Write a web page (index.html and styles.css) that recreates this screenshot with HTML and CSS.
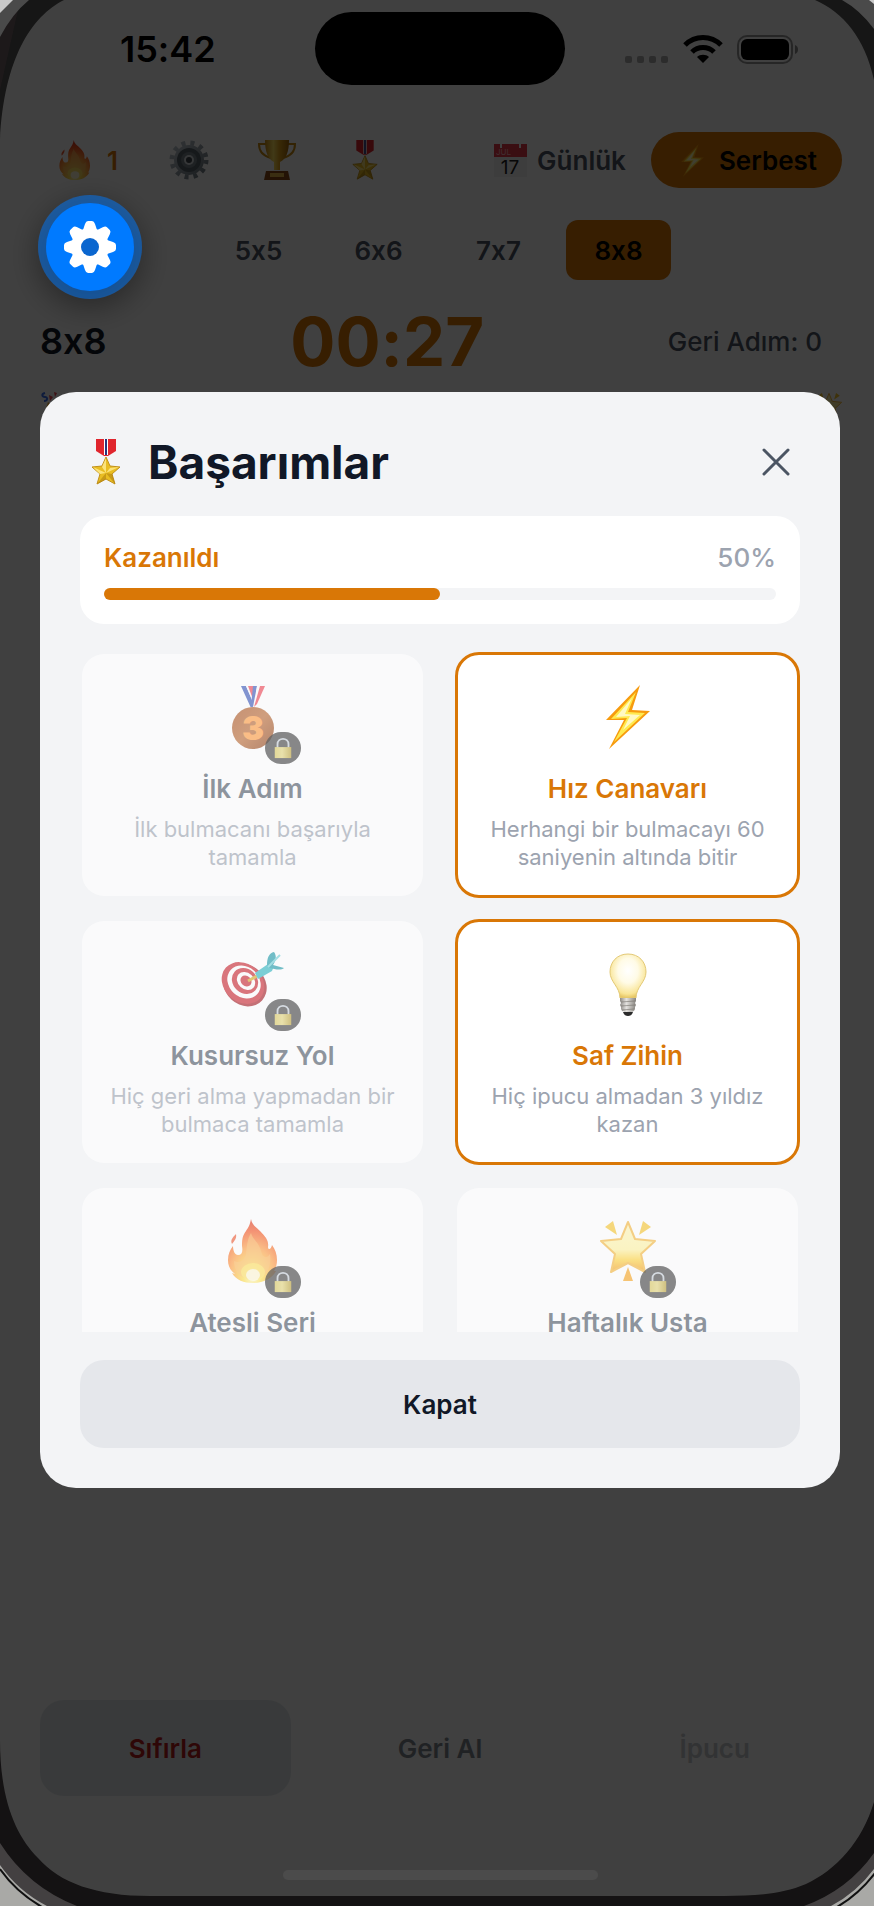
FILE: index.html
```html
<!DOCTYPE html>
<html lang="tr">
<head>
    <meta charset="UTF-8">
    <meta name="viewport" content="width=device-width, initial-scale=1.0">
    <title>Başarımlar</title>
    <link rel="stylesheet" href="styles.css">
</head>
<body>
    <!-- Icon set -->
    <svg class="sprite" width="0" height="0" aria-hidden="true">
        <defs>
            <radialGradient id="gFire" cx="50%" cy="90%" r="85%">
                <stop offset="0" stop-color="#fffbd0"/>
                <stop offset=".22" stop-color="#ffe14a"/>
                <stop offset=".55" stop-color="#ff9a3c"/>
                <stop offset=".85" stop-color="#f4511e"/>
                <stop offset="1" stop-color="#e23b1c"/>
            </radialGradient>
            <linearGradient id="gGold" x1="0" x2="1" y1="0" y2="0">
                <stop offset="0" stop-color="#c98a10"/>
                <stop offset=".35" stop-color="#ffe25e"/>
                <stop offset=".6" stop-color="#e0a31c"/>
                <stop offset="1" stop-color="#a3660a"/>
            </linearGradient>
            <radialGradient id="gBulb" cx="50%" cy="38%" r="62%">
                <stop offset="0" stop-color="#ffffff"/>
                <stop offset=".45" stop-color="#fffbe6"/>
                <stop offset=".85" stop-color="#f9e596"/>
                <stop offset="1" stop-color="#e6c562"/>
            </radialGradient>
            <linearGradient id="gBase" x1="0" x2="1" y1="0" y2="0">
                <stop offset="0" stop-color="#8d8a86"/>
                <stop offset=".4" stop-color="#e4e2df"/>
                <stop offset="1" stop-color="#87847f"/>
            </linearGradient>
            <linearGradient id="gBronze" x1="0" x2="1" y1="0" y2="1">
                <stop offset="0" stop-color="#a8501c"/>
                <stop offset=".5" stop-color="#b8662f"/>
                <stop offset="1" stop-color="#8a3c12"/>
            </linearGradient>
            <linearGradient id="gStar" x1="0" x2="0" y1="0" y2="1">
                <stop offset="0" stop-color="#fff6b8"/>
                <stop offset=".55" stop-color="#fff3a0"/>
                <stop offset=".75" stop-color="#ffd43c"/>
                <stop offset="1" stop-color="#f59a14"/>
            </linearGradient>
            <linearGradient id="gLock" x1="0" x2="1" y1="0" y2="0">
                <stop offset="0" stop-color="#d8c65c"/>
                <stop offset=".45" stop-color="#e2d47a"/>
                <stop offset="1" stop-color="#b89e34"/>
            </linearGradient>
            <linearGradient id="gSteel" x1="0" x2="1" y1="0" y2="1">
                <stop offset="0" stop-color="#c3ccd4"/>
                <stop offset="1" stop-color="#6d7881"/>
            </linearGradient>
        </defs>

        <symbol id="fire" viewBox="0 0 64 64">
            <path fill="url(#gFire)" d="M30 0c1 6 5 8 9 12 6 6 9 10 8 16 0 3 3 3 4-2 3 4 5 9 5 15 0 4-1 8-3 11l2 0c-4 8-13 12-23 12-9 0-17-3-21-10l3 1C9 51 7 47 7 41c0-6 2-10 5-14 0 5 2 9 5 9 4 0 5-3 4-9 0-8 1-11 4-15 2-3 4-6 5-12z"/>
            <path fill="#fdb95e" opacity=".6" d="M30 14c1 5 7 9 9 15 2 5 2 9 6 9 2 0 3-2 4-3 2 15-5 25-17 26-13-1-19-9-19-19 5 3 11-1 12-7 1-8 1-14 5-21z"/>
            <ellipse cx="32" cy="53" rx="12" ry="9" fill="#ffee62" opacity=".6"/>
            <ellipse cx="32" cy="56" rx="7" ry="6" fill="#fff" opacity=".7"/>
            <path fill="#ef5a33" d="M15 15c1 5-2 7-4 10-2-4 1-7 4-10z"/>
        </symbol>

        <symbol id="bolt" viewBox="0 0 64 64">
            <path fill="#f79b0e" d="M44 0 36 25l18 1-41 38 15-29-18 0z"/>
            <path fill="#ffea4f" d="M40 7 32 27l17 1-31 29 13-24-16 1z"/>
            <path fill="#fffde0" d="M36 13 29 29l15 1-17 15 7-14-14 1z" opacity=".8"/>
        </symbol>

        <symbol id="bulb" viewBox="0 0 64 64">
            <path fill="url(#gBulb)" stroke="#e3c977" stroke-width="1" d="M32 2c11 0 18 8 18 18 0 10-10 15-10 26H24c0-11-10-16-10-26C14 10 21 2 32 2z"/>
            <path fill="url(#gBase)" d="M24 46h16v3l-1 2 1 2-1 2v2c-1 3-3 3-7 3s-6 0-7-3v-2l-1-2 1-2-1-2z"/>
            <path stroke="#77736d" stroke-width="1" opacity=".6" d="M25 50l14-1M25 54l14-1M26 58l12-1"/>
            <path fill="#2b2b2b" d="M27 60h10c-1 3-3 4-5 4s-4-1-5-4z"/>
        </symbol>

        <symbol id="target" viewBox="0 0 64 64">
            <ellipse cx="24" cy="33" rx="23" ry="20" transform="rotate(42 24 33)" fill="#a51a22"/>
            <ellipse cx="22" cy="31" rx="23" ry="19" transform="rotate(42 22 31)" fill="#c9222c"/>
            <ellipse cx="23" cy="30" rx="18" ry="15" transform="rotate(42 23 30)" fill="#fff"/>
            <ellipse cx="24" cy="29" rx="14" ry="12" transform="rotate(42 24 29)" fill="#c9222c"/>
            <ellipse cx="25" cy="29" rx="10" ry="8" transform="rotate(42 25 29)" fill="#fff"/>
            <ellipse cx="25" cy="29" rx="6" ry="5" transform="rotate(42 25 29)" fill="#c9222c"/>
            <path stroke="#d6a821" stroke-width="3" d="M27 29l9-5"/>
            <path fill="#2cb5c0" d="M34 21l13-9 6 2-2 5-14 8z"/>
            <path fill="#1b9aa8" d="M46 13c0-7 2-12 7-13 3 4 2 9-1 13l11 3c-3 3-10 1-14 0z"/>
            <path stroke="#6fd0d8" stroke-width="2" d="M47 15 59 3"/>
        </symbol>

        <symbol id="star" viewBox="0 0 64 64">
            <path fill="url(#gStar)" stroke="#f5b63a" stroke-width="2" stroke-linejoin="round" d="M32 3l7 17 20 2-14 13 4 18-17-9-17 9 4-18L5 22l20-2z"/>
            <path fill="#f7c52c" d="M9 8l8-6 4 14zM55 8l-8-6-4 14z"/>
            <path fill="#f8a51e" d="M27 62l5-14 5 14z"/>
        </symbol>

        <symbol id="medal" viewBox="0 0 46 46">
            <path fill="#e0252d" d="M13 0h20v12l-8 5h-4l-8-5z"/>
            <path fill="#fff" d="M21 0h4v16h-4z"/>
            <path fill="#27357e" d="M22 0h2v16h-2z"/>
            <path fill="#e9bd22" stroke="#c1901a" stroke-width="1" d="M23 18l4 9 10 1-8 7 3 10-9-5-9 5 3-10-8-7 10-1z"/>
            <path fill="#fbe27a" d="M23 19l0 15-4-6zM10 28l13 6-6 1zM36 28l-13 6 4-5z"/>
            <path fill="#a8770c" opacity=".5" d="M32 45l-9-11 6 1zM14 45l9-11v6z"/>
        </symbol>

        <symbol id="cog" viewBox="0 0 40 40">
            <circle cx="20" cy="20" r="17" fill="none" stroke="url(#gSteel)" stroke-width="5" stroke-dasharray="4 5"/>
            <circle cx="20" cy="20" r="15" fill="url(#gSteel)"/>
            <circle cx="20" cy="20" r="12" fill="#59636b"/>
            <circle cx="20" cy="20" r="8" fill="#77828a"/>
            <circle cx="20" cy="20" r="5" fill="#d5dbe0"/>
            <circle cx="20" cy="20" r="3" fill="#3d454b"/>
        </symbol>

        <symbol id="trophy" viewBox="0 0 40 40">
            <path fill="none" stroke="#c98a10" stroke-width="2" d="M10 4H2c0 8 4 12 12 14M30 4h8c0 8-4 12-12 14"/>
            <path fill="url(#gGold)" d="M8 0h24c0 12-3 19-9 22v8h-6v-8C11 19 8 12 8 0z"/>
            <path fill="#8a4a16" d="M9 31h22l2 9H7z"/>
            <path fill="#e5b64a" d="M13 33h14v4H13z"/>
        </symbol>

        <symbol id="lock" viewBox="0 0 20 24">
            <path fill="none" stroke="#c3cbd4" stroke-width="2" d="M4 12V8c0-4 3-6 6-6s6 2 6 6v4"/>
            <path fill="url(#gLock)" d="M1 11h18v12H1z"/>
        </symbol>

        <symbol id="confetti" viewBox="0 0 30 30">
            <path fill="none" stroke="#3b6ff0" stroke-width="2" d="M5 1c-4 1-3 4 0 4s3 4-1 4"/>
            <path fill="#ef4352" d="M9 3l4 2-3 4zM14 0l3 1-2 4z"/>
            <path fill="#f3b23a" d="M8 10l14 12L2 29z"/>
        </symbol>
    </svg>

    <div class="screen">
        <header class="status-bar">
            <span class="clock">15:42</span>
            <div class="status-icons">
                <svg width="45" height="8" viewBox="0 0 45 8" fill="#000" opacity=".3">
                    <rect x="1" width="7" height="7" rx="2"/><rect x="13" width="7" height="7" rx="2"/><rect x="25" width="7" height="7" rx="2"/><rect x="37" width="7" height="7" rx="2"/>
                </svg>
                <svg class="wifi" width="40" height="29" viewBox="0 0 40 29">
                    <g fill="none" stroke="#000" stroke-width="5">
                        <path d="M2 10c10-10 26-10 36 0"/>
                        <path d="M9 17c6-6 16-6 22 0"/>
                    </g>
                    <path d="M20 28l-6-6c3-3 9-3 12 0z"/>
                </svg>
                <svg width="63" height="29" viewBox="0 0 63 29">
                    <rect x="1" y="1" width="54" height="27" rx="9" fill="none" stroke="#000" stroke-opacity=".4" stroke-width="2"/>
                    <rect x="4" y="4" width="48" height="21" rx="6"/>
                    <path d="M58 10c4 1 4 8 0 9z" opacity=".45"/>
                </svg>
            </div>
        </header>

        <nav class="top-row">
            <div class="chips">
                <button class="chip streak"><svg width="40" height="40"><use href="#fire"/></svg>1</button>
                <button class="chip" aria-label="Ayarlar"><svg width="40" height="40"><use href="#cog"/></svg></button>
                <button class="chip" aria-label="Sıralama"><svg width="40" height="40"><use href="#trophy"/></svg></button>
                <button class="chip" aria-label="Başarımlar"><svg width="40" height="40"><use href="#medal"/></svg></button>
            </div>
            <div class="modes">
                <button class="mode">
                    <svg width="33" height="33" viewBox="0 0 33 33">
                        <path fill="#f3f3f3" d="M0 0h33v33H0z"/>
                        <path fill="#e5394a" d="M0 0h33v13H0z"/>
                        <path fill="#fff" d="M6 0h2v4H6zM25 0h2v4h-2z"/>
                        <text class="cal-month" x="2" y="11">JUL</text>
                        <text class="cal-day" x="16" y="30" text-anchor="middle">17</text>
                    </svg>
                    Günlük
                </button>
                <button class="mode active"><svg width="33" height="33"><use href="#bolt"/></svg>Serbest</button>
            </div>
        </nav>

        <div class="sizes">
            <button class="size">5x5</button>
            <button class="size">6x6</button>
            <button class="size">7x7</button>
            <button class="size active">8x8</button>
        </div>

        <div class="stats">
            <span class="level">8x8</span>
            <span class="timer">00:27</span>
            <span class="undo-count">Geri Adım: 0</span>
        </div>

        <div class="board-line">
            <svg width="30" height="30"><use href="#confetti"/></svg>
            <svg width="30" height="30"><use href="#star"/></svg>
        </div>

        <footer class="actions">
            <button class="action reset">Sıfırla</button>
            <button class="action undo">Geri Al</button>
            <button class="action" disabled>İpucu</button>
        </footer>
    </div>

    <div class="overlay">
        <section class="modal" role="dialog" aria-labelledby="modalTitle">
            <div class="modal-header">
                <svg width="52" height="46"><use href="#medal"/></svg>
                <h2 id="modalTitle">Başarımlar</h2>
                <button class="close-icon" aria-label="Pencereyi kapat">
                    <svg width="28" height="28" viewBox="0 0 28 28" fill="none" stroke="#4b5563" stroke-width="3" stroke-linecap="round"><path d="M2 2l24 24M26 2L2 26"/></svg>
                </button>
            </div>

            <div class="progress-card">
                <div class="progress-text">
                    <span class="earned-label">Kazanıldı</span>
                    <span class="percent">50%</span>
                </div>
                <div class="bar" role="progressbar" aria-valuenow="50" aria-valuemin="0" aria-valuemax="100" aria-label="Kazanıldı">
                    <div class="bar-fill" style="width: 50%"></div>
                </div>
            </div>

            <div class="badge-list">
                <article class="card locked">
                    <div class="card-icon">
                        <svg width="64" height="64" viewBox="0 0 64 64">
                            <path fill="#3856b8" d="M20 1h5l8 18-3 4z"/>
                            <path fill="#fff" d="M25 1h2l7 14-1 5z"/>
                            <path fill="#ef4352" d="M27 1h5l4 9-3 7z"/>
                            <path fill="#3856b8" d="M32 1h4l-3 22-3-2z"/>
                            <path fill="#fff" d="M36 1h3l-5 21h-2z"/>
                            <path fill="#ef4352" d="M39 1h5l-8 18-3 3z"/>
                            <circle cx="32" cy="43" r="21" fill="url(#gBronze)"/>
                            <text class="medal-number" x="32" y="55" text-anchor="middle">3</text>
                        </svg>
                        <span class="lock"><svg width="20" height="22"><use href="#lock"/></svg></span>
                    </div>
                    <h3>İlk Adım</h3>
                    <p>İlk bulmacanı başarıyla tamamla</p>
                </article>
                <article class="card earned">
                    <div class="card-icon"><svg width="64" height="64"><use href="#bolt"/></svg></div>
                    <h3>Hız Canavarı</h3>
                    <p>Herhangi bir bulmacayı 60 saniyenin altında bitir</p>
                </article>
                <article class="card locked">
                    <div class="card-icon">
                        <svg width="64" height="64"><use href="#target"/></svg>
                        <span class="lock"><svg width="20" height="22"><use href="#lock"/></svg></span>
                    </div>
                    <h3>Kusursuz Yol</h3>
                    <p>Hiç geri alma yapmadan bir bulmaca tamamla</p>
                </article>
                <article class="card earned">
                    <div class="card-icon"><svg width="64" height="64"><use href="#bulb"/></svg></div>
                    <h3>Saf Zihin</h3>
                    <p>Hiç ipucu almadan 3 yıldız kazan</p>
                </article>
                <article class="card locked">
                    <div class="card-icon">
                        <svg width="64" height="64"><use href="#fire"/></svg>
                        <span class="lock"><svg width="20" height="22"><use href="#lock"/></svg></span>
                    </div>
                    <h3>Atesli Seri</h3>
                </article>
                <article class="card locked">
                    <div class="card-icon">
                        <svg width="64" height="64"><use href="#star"/></svg>
                        <span class="lock"><svg width="20" height="22"><use href="#lock"/></svg></span>
                    </div>
                    <h3>Haftalık Usta</h3>
                </article>
            </div>

            <button class="close-button">Kapat</button>
        </section>
    </div>

    <button class="fab" aria-label="Geliştirici menüsü">
        <svg width="52" height="52" viewBox="-26 -26 52 52">
            <defs><path id="tooth" d="M-8 -14L-5 -23Q-4 -26 -2 -26H2Q4 -26 5 -23L8 -14z"/></defs>
            <g fill="#fff">
                <circle r="19"/>
                <use href="#tooth"/><use href="#tooth" transform="rotate(45)"/><use href="#tooth" transform="rotate(90)"/><use href="#tooth" transform="rotate(135)"/>
                <use href="#tooth" transform="rotate(180)"/><use href="#tooth" transform="rotate(225)"/><use href="#tooth" transform="rotate(270)"/><use href="#tooth" transform="rotate(315)"/>
            </g>
            <circle r="9" fill="#0a66cf"/>
        </svg>
    </button>

    <!-- Phone frame -->
    <div class="frame" aria-hidden="true">
        <div class="island"></div>
        <div class="home-bar"></div>
        <svg class="corner top-left" width="70" height="140" viewBox="0 0 70 140">
            <path fill="#161616" d="M0 0h64C32 16 4 58 0 140z"/>
            <path fill="#231c1e" d="M0 10h18L0 90z" opacity=".6"/>
            <path fill="#4a4a4a" d="M0 0h29Q12 14 0 37z"/>
            <path fill="#c9c9c9" d="M0 0h13L0 13z"/>
        </svg>
        <svg class="corner top-right" width="60" height="80" viewBox="0 0 60 80">
            <path fill="#161616" d="M60 0H1c28 12 50 38 59 80z"/>
            <path fill="#4a4a4a" d="M60 0H28q18 10 32 29z"/>
            <path fill="#c9c9c9" d="M60 0h-5l5 4z"/>
        </svg>
        <svg class="corner bottom-left" width="150" height="166" viewBox="0 0 150 166">
            <path fill="#141213" d="M0 0c0 60 16 96 38 118 22 25 58 38 112 38v10H0z"/>
            <path fill="#434041" d="M0 103q28 44 77 63H0z"/>
            <path fill="#a9a9a6" d="M0 125q18 26 47 41H0z"/>
            <path fill="none" stroke="#111" stroke-width="2" d="M0 129q16 23 42 38"/>
        </svg>
        <svg class="corner bottom-right" width="150" height="110" viewBox="0 0 150 110">
            <path fill="#141213" d="M150 6c-12 40-38 68-68 82-24 10-48 12-82 12v10h150z"/>
            <path fill="#434041" d="M150 57q-26 37-70 53h70z"/>
            <path fill="#a9a9a6" d="M150 73q-18 24-43 37h43z"/>
            <path fill="none" stroke="#111" stroke-width="2" d="M151 77q-16 21-38 34"/>
        </svg>
    </div>
</body>
</html>
```
FILE: styles.css
```css
* {
    box-sizing: border-box;
}
body {
    margin: 0;
    font-family: Inter, "Liberation Sans", sans-serif;
    font-size: 26px;
    /* keeps the x in "8x8" a plain letter */
    font-variant-ligatures: no-contextual;
    background-color: #fdfdfd;
    color: #111827;
}
button {
    font: inherit;
    font-variant-ligatures: no-contextual;
    font-weight: 600;
    border: none;
    padding: 0;
    background: none;
    color: inherit;
    cursor: pointer;
}
h2, h3, p {
    margin: 0;
}
svg {
    display: block;
    flex-shrink: 0;
}
.sprite {
    position: absolute;
}

/* Game screen */
.screen {
    min-height: 100vh;
    display: flex;
    flex-direction: column;
}
.status-bar {
    height: 98px;
    padding: 0 74px 0 120px;
    display: flex;
    justify-content: space-between;
    align-items: center;
    color: #000;
}
.clock {
    font-size: 36px;
    font-weight: 600;
}
.status-icons {
    display: flex;
    align-items: flex-end;
    gap: 14px;
}
.top-row {
    margin-top: 30px;
    padding: 0 28px 0 36px;
    display: flex;
    justify-content: space-between;
}
.chips {
    display: flex;
    gap: 16px;
}
.chip {
    width: 72px;
    height: 64px;
    border-radius: 32px;
    background-color: #fff;
    display: flex;
    align-items: center;
    justify-content: center;
}
.streak {
    width: 101px;
    gap: 12px;
    color: #d97706;
}
.modes {
    display: flex;
    padding: 4px;
    border-radius: 32px;
    background-color: #fff;
}
.mode {
    display: flex;
    align-items: center;
    gap: 10px;
    height: 56px;
    padding: 0 25px;
    border-radius: 28px;
    color: #4b5563;
}
.cal-month {
    font-size: 8px;
    font-weight: 400;
    fill: #ffb3bb;
}
.cal-day {
    font-size: 19px;
    font-weight: 400;
    fill: #222;
}
.mode.active, .size.active {
    background-color: #d97706;
    color: #000;
}
.sizes {
    margin-top: 28px;
    padding-left: 3px;
    display: flex;
    justify-content: center;
    gap: 15px;
}
.size {
    width: 105px;
    height: 60px;
    border-radius: 12px;
    background-color: #fff;
    color: #4b5563;
}
.stats {
    margin-top: 24px;
    padding: 0 52px 0 40px;
    height: 74px;
    display: flex;
    justify-content: space-between;
    align-items: center;
}
.level {
    font-size: 36px;
    font-weight: 600;
}
.timer {
    font-size: 67px;
    font-weight: 700;
    color: #d97706;
}
.undo-count {
    font-weight: 500;
    color: #4b5563;
}
.board-line {
    margin-top: 14px;
    padding: 0 30px 0 40px;
    display: flex;
    justify-content: space-between;
}
.actions {
    margin-top: auto;
    padding: 0 34px 110px 40px;
    display: flex;
    gap: 24px;
}
.action {
    flex: 1;
    height: 96px;
    border-radius: 24px;
    color: #4b5563;
}
.undo {
    opacity: 0.7;
}
.action:disabled {
    opacity: 0.3;
}
.reset {
    background-color: #e2e8ec;
    color: #b91c1c;
}

/* Achievements modal */
.overlay {
    position: fixed;
    inset: 0;
    padding: 0 34px 26px 40px;
    background-color: rgba(0, 0, 0, 0.75);
    display: flex;
    align-items: center;
}
.modal {
    width: 100%;
    padding: 40px;
    border-radius: 36px;
    background-color: #f3f4f6;
}
.modal-header {
    display: flex;
    align-items: center;
    gap: 16px;
    height: 60px;
    margin-bottom: 24px;
}
.modal-header h2 {
    flex: 1;
    font-size: 46px;
    font-weight: 700;
}
.close-icon {
    width: 48px;
    height: 48px;
    display: flex;
    align-items: center;
    justify-content: center;
}
.progress-card {
    padding: 24px;
    border-radius: 24px;
    background-color: #fff;
}
.progress-text {
    display: flex;
    justify-content: space-between;
    line-height: 36px;
    margin-bottom: 12px;
}
.earned-label {
    font-weight: 600;
    color: #d97706;
}
.percent {
    font-weight: 500;
    color: #9ca3af;
}
.bar {
    height: 12px;
    border-radius: 6px;
    background-color: #f3f4f6;
}
.bar-fill {
    height: 100%;
    border-radius: 6px;
    background-color: #d97706;
}
.badge-list {
    margin: 28px 0;
    max-height: 680px;
    overflow: hidden;
    display: grid;
    grid-template-columns: 1fr 1fr;
    grid-auto-rows: 246px;
    gap: 21px 30px;
}
.card {
    padding: 24px 20px;
    border: 3px solid #d97706;
    border-radius: 24px;
    background-color: #fff;
    display: flex;
    flex-direction: column;
    align-items: center;
    text-align: center;
}
.locked {
    border: 2px solid transparent;
    padding: 25px 21px;
    background-clip: padding-box;
    opacity: 0.6;
}
.card-icon {
    position: relative;
    height: 76px;
    padding-top: 6px;
    margin-bottom: 18px;
}
.medal-number {
    font-size: 33px;
    font-weight: 900;
    fill: #ff9a3c;
}
.lock {
    position: absolute;
    right: -16px;
    bottom: -9px;
    width: 36px;
    height: 32px;
    border-radius: 16px;
    background-color: rgba(0, 0, 0, 0.75);
    display: flex;
    align-items: center;
    justify-content: center;
}
.card h3 {
    margin-bottom: 10px;
    font-size: 26px;
    font-weight: 600;
    line-height: 32px;
    color: #4b5563;
}
.earned h3 {
    color: #d97706;
}
.card p {
    font-size: 22px;
    line-height: 28px;
    color: #9ca3af;
}
.close-button {
    width: 100%;
    height: 88px;
    border-radius: 24px;
    background-color: #e5e7eb;
}

/* Floating button */
.fab {
    position: fixed;
    top: 203px;
    left: 46px;
    width: 88px;
    height: 88px;
    border-radius: 50%;
    background-color: #007aff;
    box-shadow: 0 0 0 8px rgba(0, 122, 255, 0.5), 0 8px 32px 8px rgba(0, 0, 0, 0.4);
    display: flex;
    align-items: center;
    justify-content: center;
}

/* Phone frame */
.frame {
    position: fixed;
    inset: 0;
    border-bottom: 10px solid #141213;
    pointer-events: none;
}
.island {
    position: absolute;
    top: 12px;
    left: 50%;
    width: 250px;
    height: 73px;
    margin-left: -122px;
    border-radius: 37px;
    background-color: #000;
}
.home-bar {
    position: absolute;
    bottom: 16px;
    left: 50%;
    width: 315px;
    height: 10px;
    margin-left: -154px;
    border-radius: 5px;
    background-color: #4b4b4b;
}
.corner {
    position: absolute;
}
.top-left {
    top: 0;
    left: 0;
}
.top-right {
    top: 0;
    right: 0;
}
.bottom-left {
    bottom: -10px;
    left: 0;
}
.bottom-right {
    bottom: -10px;
    right: 0;
}
```
